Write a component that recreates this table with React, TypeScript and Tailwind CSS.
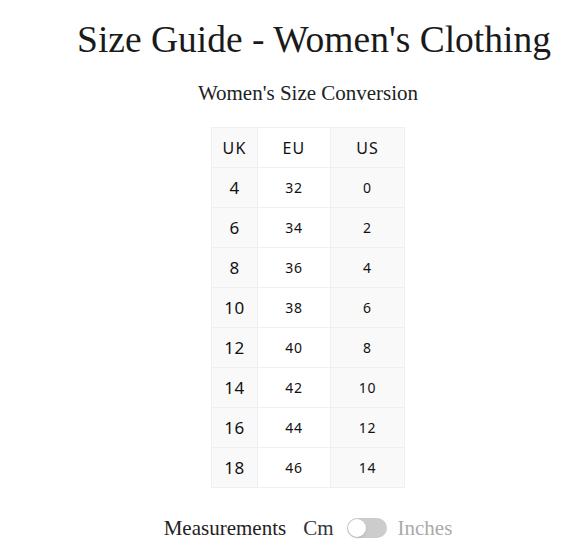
import React from "react";

const rows = [
  ["4", "32", "0"],
  ["6", "34", "2"],
  ["8", "36", "4"],
  ["10", "38", "6"],
  ["12", "40", "8"],
  ["14", "42", "10"],
  ["16", "44", "12"],
  ["18", "46", "14"],
];

export default function App() {
  const serif = { fontFamily: '"Liberation Serif", "DejaVu Serif", serif' };
  const sans = { fontFamily: '"Noto Sans", "Open Sans", sans-serif' };
  return (
    <div className="w-[566px] h-[559px] bg-white overflow-hidden pl-[50px] text-[#222]">
      <div className="flex flex-col items-center">
        <h1 className="mt-[18px] ml-[12px] text-[37.5px] leading-[44px] whitespace-nowrap text-[#1a1a1a]" style={serif}>
          Size Guide - Women's Clothing
        </h1>
        <h2 className="mt-[19px] text-[21px] leading-[24px] text-[#222]" style={serif}>
          Women's Size Conversion
        </h2>
        <table className="mt-[22px] border-collapse text-[#111]" style={sans}>
          <thead>
            <tr className="h-[40px]">
              <th className="w-[46px] bg-[#f9f9f9] border border-[#f0f0f0] font-normal text-[16px] tracking-[0.07em]">UK</th>
              <th className="w-[73px] bg-white border border-[#f0f0f0] font-normal text-[16px] tracking-[0.07em]">EU</th>
              <th className="w-[74px] bg-[#f9f9f9] border border-[#f0f0f0] font-normal text-[16px] tracking-[0.07em]">US</th>
            </tr>
          </thead>
          <tbody>
            {rows.map((r) => (
              <tr key={r[0]} className="h-[40px]">
                <td className="bg-[#f9f9f9] border border-[#f0f0f0] text-center text-[17px] tracking-[0.03em]">{r[0]}</td>
                <td className="bg-white border border-[#f0f0f0] text-center text-[14px] tracking-[0.06em]">{r[1]}</td>
                <td className="bg-[#f9f9f9] border border-[#f0f0f0] text-center text-[14px] tracking-[0.06em]">{r[2]}</td>
              </tr>
            ))}
          </tbody>
        </table>
        <div className="mt-[28px] flex items-center text-[21px] leading-[24px]" style={serif}>
          <span className="text-[#222]">Measurements</span>
          <span className="ml-[17px] text-[#333]">Cm</span>
          <span className="ml-[13px] relative inline-block w-[40px] h-[20px] rounded-full bg-[#ccc]">
            <span className="absolute left-[1px] top-[1px] w-[18px] h-[18px] rounded-full bg-white shadow-sm" />
          </span>
          <span className="ml-[11px] text-[#aaa]">Inches</span>
        </div>
      </div>
    </div>
  );
}
